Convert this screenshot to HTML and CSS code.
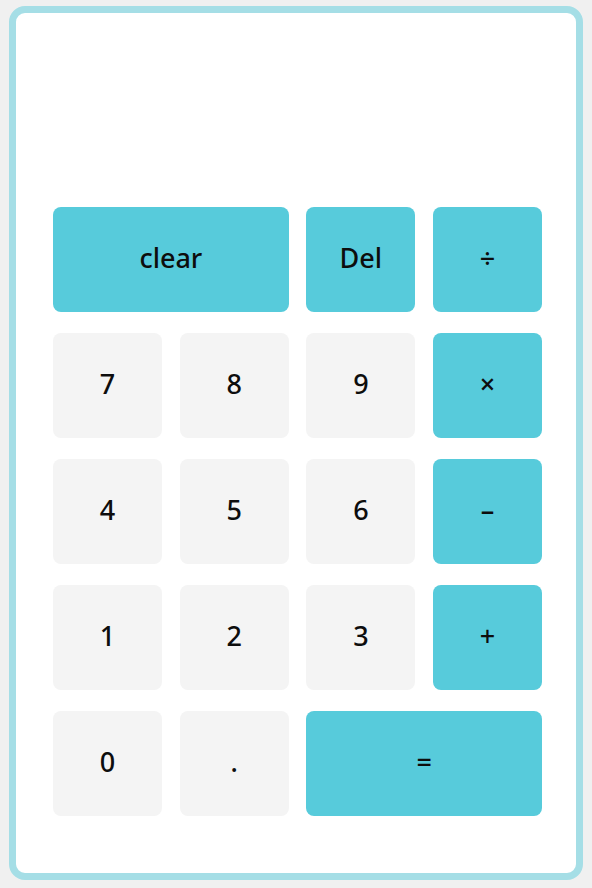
FILE: index.html
```html
<!DOCTYPE html>
<html>
<head>
<meta charset="utf-8">
<link rel="stylesheet" href="styles.css">
</head>
<body>
<div class="calc">
  <div class="display"></div>
  <div class="keys">
    <button class="key op span2">clear</button>
    <button class="key op">Del</button>
    <button class="key op">÷</button>
    <button class="key">7</button>
    <button class="key">8</button>
    <button class="key">9</button>
    <button class="key op">×</button>
    <button class="key">4</button>
    <button class="key">5</button>
    <button class="key">6</button>
    <button class="key op">–</button>
    <button class="key">1</button>
    <button class="key">2</button>
    <button class="key">3</button>
    <button class="key op">+</button>
    <button class="key">0</button>
    <button class="key">.</button>
    <button class="key op span2">=</button>
  </div>
</div>
</body>
</html>
```
FILE: styles.css
```css
html, body {
  margin: 0;
  padding: 0;
  background: #f0f0f0;
}
body {
  padding: 6px 9px 8px 9px;
  font-family: "Noto Sans", "Open Sans", sans-serif;
}
.calc {
  box-sizing: border-box;
  width: 574px;
  height: 874px;
  background: #ffffff;
  border: 7px solid #a5dee6;
  border-radius: 16px;
  padding: 0 34px 0 37px;
}
.display {
  height: 194px;
}
.keys {
  display: grid;
  grid-template-columns: repeat(4, 109px);
  grid-auto-rows: 105px;
  column-gap: 17.7px;
  row-gap: 21px;
}
.key {
  border: none;
  border-radius: 8px;
  background: #f4f4f4;
  color: #0d0d0d;
  font-family: "Noto Sans", "Open Sans", sans-serif;
  font-size: 27px;
  font-weight: 500;
  padding: 0 0 4px 0;
  margin: 0;
  display: flex;
  align-items: center;
  justify-content: center;
}
.op {
  background: #57cbdb;
}
.span2 {
  grid-column: span 2;
}
```
